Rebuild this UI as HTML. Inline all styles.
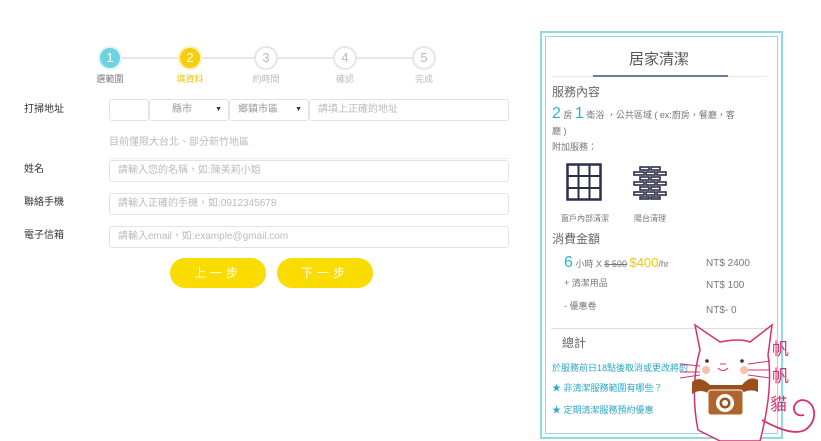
<!DOCTYPE html>
<html><head><meta charset="utf-8"><style>
*{margin:0;padding:0;box-sizing:border-box}
body{width:821px;height:441px;background:#fff;position:relative;overflow:hidden;font-family:"Liberation Sans","Noto Sans CJK TC",sans-serif;color:#555}
.a{position:absolute}
.c{position:absolute;width:24px;height:24px;border-radius:50%;border:2px solid #e6e6e6;text-align:center;line-height:20px;font-size:13px;color:#bbb;background:#fff}
.lb{position:absolute;font-size:9px;color:#bbb;width:60px;text-align:center}
.in{position:absolute;border:1px solid #e3e3e3;border-radius:3px;font-size:10px;color:#bbb;padding-left:8px;line-height:20px;height:22px}
.fl{position:absolute;left:24px;font-size:10px;color:#333}
.btn{position:absolute;top:258px;width:96px;height:30px;border-radius:15px;background:#fadc00;color:#fff;font-size:12px;text-align:center;line-height:30px;letter-spacing:4px}
.p{position:absolute;font-size:10px;color:#777}
</style></head><body>
<div class="a" style="left:118px;top:57px;width:300px;height:2px;background:#e6e6e6"></div>
<div class="c" style="left:98px;top:46px;background:#6dd3e1;border-color:#dff4f7;color:#fff">1</div>
<div class="c" style="left:178px;top:46px;background:#f8cd0b;border-color:#fdf0bb;color:#fff">2</div>
<div class="c" style="left:254px;top:46px">3</div>
<div class="c" style="left:333px;top:46px">4</div>
<div class="c" style="left:412px;top:46px">5</div>
<div class="lb" style="left:80px;top:72px;color:#777">選範圍</div>
<div class="lb" style="left:160px;top:72px;color:#f2c500">填資料</div>
<div class="lb" style="left:236px;top:72px">約時間</div>
<div class="lb" style="left:315px;top:72px">確認</div>
<div class="lb" style="left:394px;top:72px">完成</div>

<div class="fl" style="top:100px">打掃地址</div>
<div class="in" style="left:109px;top:99px;width:40px"></div>
<div class="in" style="left:149px;top:99px;width:80px;padding-left:22px;color:#999">縣市<span style="position:absolute;right:6px;font-size:7px;color:#333">▼</span></div>
<div class="in" style="left:229px;top:99px;width:80px;color:#999">鄉鎮市區<span style="position:absolute;right:6px;font-size:7px;color:#333">▼</span></div>
<div class="in" style="left:309px;top:99px;width:200px">請填上正確的地址</div>
<div class="a" style="left:109px;top:133px;font-size:10px;color:#bbb">目前僅限大台北、部分新竹地區</div>
<div class="a" style="left:109px;top:158px;width:400px;height:1px;background:#eee"></div>
<div class="fl" style="top:160px">姓名</div>
<div class="in" style="left:109px;top:160px;width:400px">請輸入您的名稱，如:陳美莉小姐</div>
<div class="fl" style="top:193px">聯絡手機</div>
<div class="in" style="left:109px;top:193px;width:400px">請輸入正確的手機，如:0912345678</div>
<div class="fl" style="top:226px">電子信箱</div>
<div class="in" style="left:109px;top:226px;width:400px">請輸入email，如:example@gmail.com</div>
<div class="btn" style="left:170px">上一步</div>
<div class="btn" style="left:277px">下一步</div>

<div class="a" style="left:540px;top:31px;width:243px;height:408px;border:2px solid #8fdbe3"></div>
<div class="a" style="left:545px;top:36px;width:233px;height:398px;border:1px solid #8fdbe3"></div>
<div class="a" style="left:551px;top:48px;width:216px;text-align:center;font-size:15px;color:#555">居家清潔</div>
<div class="a" style="left:551px;top:76px;width:216px;height:1px;background:#e6e6e6"></div>
<div class="a" style="left:593px;top:75px;width:135px;height:2px;background:#6d7a99"></div>
<div class="a" style="left:552px;top:83px;font-size:12px;color:#666">服務內容</div>
<div class="p" style="left:552px;top:106px;width:218px;line-height:16px;font-size:9px"><span style="font-size:16px;color:#2bb5cc">2</span> 房 <span style="font-size:16px;color:#2bb5cc">1</span> 衛浴 ，公共區域 ( ex:廚房，餐廳，客<br>廳 )</div>
<div class="p" style="left:552px;top:140px;font-size:9px">附加服務：</div>
<svg class="a" style="left:566px;top:163px" width="36" height="38"><rect x="1.5" y="1.5" width="33" height="35" fill="none" stroke="#2d2f4a" stroke-width="2.5"/><path d="M12.5 2v34M23.5 2v34M2 13h32M2 25h32" stroke="#2d2f4a" stroke-width="2"/></svg>
<svg class="a" style="left:632px;top:166px" width="36" height="34" fill="none" stroke="#2d2f4a" stroke-width="1.6"><rect x="8" y="1" width="9" height="3"/><rect x="19" y="1" width="9" height="3"/><rect x="2" y="6" width="10" height="3"/><rect x="14" y="6" width="9" height="3"/><rect x="25" y="6" width="9" height="3"/><rect x="8" y="11" width="9" height="3"/><rect x="19" y="11" width="9" height="3"/><rect x="2" y="16" width="10" height="3"/><rect x="14" y="16" width="9" height="3"/><rect x="25" y="16" width="9" height="3"/><rect x="8" y="21" width="9" height="3"/><rect x="19" y="21" width="9" height="3"/><rect x="2" y="26" width="10" height="3"/><rect x="14" y="26" width="9" height="3"/><rect x="25" y="26" width="9" height="3"/><rect x="8" y="31" width="9" height="2"/><rect x="19" y="31" width="9" height="2"/></svg>
<div class="a" style="left:561px;top:213px;font-size:8px;color:#777">窗戶內部清潔</div>
<div class="a" style="left:634px;top:213px;font-size:8px;color:#777">陽台清理</div>
<div class="a" style="left:552px;top:230px;font-size:12px;color:#666">消費金額</div>
<div class="p" style="left:564px;top:254px;font-size:9px"><span style="font-size:16px;color:#2bb5cc">6</span> 小時 X <s>$ 500</s> <span style="font-size:13px;color:#f5c800">$400</span>/hr</div>
<div class="p" style="left:706px;top:258px">NT$ 2400</div>
<div class="p" style="left:564px;top:276px;font-size:9px">+ 清潔用品</div>
<div class="p" style="left:706px;top:280px">NT$ 100</div>
<div class="p" style="left:564px;top:299px;font-size:9px">- 優惠卷</div>
<div class="p" style="left:706px;top:305px">NT$- 0</div>
<div class="a" style="left:551px;top:328px;width:216px;height:1px;background:#ddd"></div>
<div class="a" style="left:562px;top:334px;font-size:12px;color:#666">總計</div>
<div class="a" style="left:552px;top:361px;font-size:9px;color:#2ba8c8">於服務前日18點後取消或更改將酌</div>
<div class="a" style="left:552px;top:381px;font-size:9px;color:#2ba8c8">★ 非清潔服務範圍有哪些？</div>
<div class="a" style="left:552px;top:403px;font-size:9px;color:#2ba8c8">★ 定期清潔服務預約優惠</div>

<svg class="a" style="left:680px;top:320px" width="141" height="121">
<path d="M18 110 C12 80 14 50 20 30 L15 5 L40 22 Q60 18 70 22 L92 5 L88 35 C92 60 88 90 80 121 L40 121 Z" fill="#fff" stroke="#d6306e" stroke-width="1.5"/>
<path d="M82 100 C100 110 115 115 125 110 C140 100 135 80 122 80 C110 82 112 98 124 95" fill="none" stroke="#d6306e" stroke-width="1.8"/>
<circle cx="27" cy="41" r="1.8" fill="#333"/><circle cx="62" cy="41" r="1.8" fill="#333"/>
<circle cx="26" cy="50" r="4" fill="#f7c2a6"/><circle cx="64" cy="50" r="4" fill="#f7c2a6"/>
<path d="M40 44 h6 M38 48 q5 5 10 0" stroke="#d6306e" fill="none"/>
<path d="M0 44 l20 2 M0 52 l20 0 M0 58 l20 -3 M68 44 l22 -3 M68 50 l22 0 M68 55 l22 3" stroke="#d6306e" stroke-width="1"/>
<path d="M12 62 Q20 55 30 65 L62 65 Q70 55 78 60 L78 72 Q70 68 60 74 L30 74 Q20 68 12 74 Z" fill="#9b4f1d"/>
<rect x="28" y="70" width="35" height="25" rx="3" fill="#b0642a" stroke="#fff"/>
<circle cx="45" cy="83" r="9" fill="#fff"/><circle cx="45" cy="83" r="5.5" fill="#9b4f1d"/><circle cx="45" cy="83" r="3" fill="#fff"/>
<text x="92" y="35" font-size="17" fill="#d6306e" font-family="Noto Sans CJK TC,sans-serif">帆</text>
<text x="92" y="62" font-size="17" fill="#d6306e" font-family="Noto Sans CJK TC,sans-serif">帆</text>
<text x="90" y="90" font-size="17" fill="#d6306e" font-family="Noto Sans CJK TC,sans-serif">貓</text>
</svg>
</body></html>
